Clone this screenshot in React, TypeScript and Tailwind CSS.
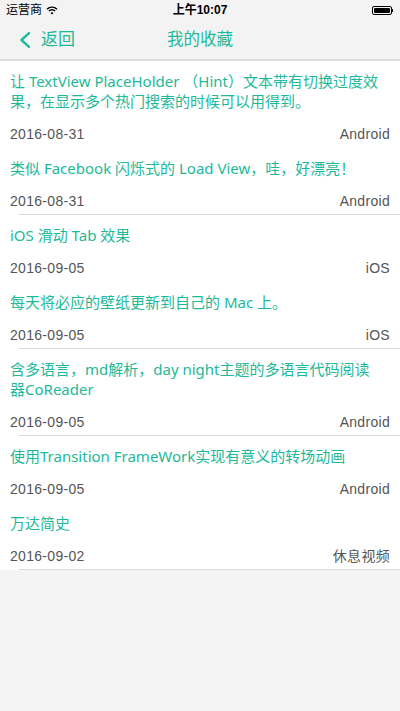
const items = [
    { title: "让 TextView PlaceHolder （Hint）文本带有切换过度效果，在显示多个热门搜索的时候可以用得到。", date: "2016-08-31", tag: "Android", line: false },
    { title: "类似 Facebook 闪烁式的 Load View，哇，好漂亮！", date: "2016-08-31", tag: "Android", line: true },
    { title: "iOS 滑动 Tab 效果", date: "2016-09-05", tag: "iOS", line: false },
    { title: "每天将必应的壁纸更新到自己的 Mac 上。", date: "2016-09-05", tag: "iOS", line: true },
    // the original wraps before 器
    { title: "含多语言，md解析，day night主题的多语言代码阅读\n器CoReader", date: "2016-09-05", tag: "Android", line: true },
    { title: "使用Transition FrameWork实现有意义的转场动画", date: "2016-09-05", tag: "Android", line: false },
    { title: "万达简史", date: "2016-09-02", tag: "休息视频", line: true },
];

const font = { fontFamily: '"Liberation Sans", "Noto Sans CJK SC", sans-serif' };
const titleFont = { fontFamily: '"Noto Sans", "Noto Sans CJK SC", sans-serif' };

const StatusBar = () => (
    <div className="h-5 flex items-center justify-between px-[6px] relative text-black">
        <div className="flex items-center gap-[4px] text-[12px]">
            <span>运营商</span>
            <svg width="12" height="9" viewBox="0 0 12 9">
                <path d="M1 3.2a7 7 0 0 1 10 0" stroke="#000" strokeWidth="1.4" fill="none" />
                <path d="M2.9 5.1a4.3 4.3 0 0 1 6.2 0" stroke="#000" strokeWidth="1.4" fill="none" />
                <path d="M6 8.5 4.5 6.9a2.2 2.2 0 0 1 3 0z" fill="#000" />
            </svg>
        </div>
        <span className="absolute left-1/2 -translate-x-1/2 text-[12px] font-semibold">上午10:07</span>
        <div className="flex items-center mr-[1px]">
            <div className="w-[20px] h-[9px] border border-black rounded-[2px] p-[1px]">
                <div className="w-full h-full bg-black rounded-[1px]" />
            </div>
            <div className="w-[1.5px] h-[3px] bg-black" />
        </div>
    </div>
);

const NavBar = () => (
    <div className="h-[41px] flex items-center relative border-b-2 border-[#dcdcdc]">
        <div className="flex items-center pl-[19px] text-[#1db998]">
            {/* back chevron */}
            <svg width="12" height="16" viewBox="0 0 12 16">
                <path d="M10 1.2 2.5 8l7.5 6.8" stroke="currentColor" strokeWidth="2.4" fill="none" strokeLinecap="round" strokeLinejoin="round" />
            </svg>
            <span className="ml-[10px] text-[17px]">返回</span>
        </div>
        <span className="absolute left-1/2 -translate-x-1/2 text-[16.5px] text-[#1db998]">我的收藏</span>
    </div>
);

export default function App() {
    return (
        <div className="w-[400px] h-[711px] bg-[#f4f4f4]" style={font}>
            <div className="bg-[#f3f3f3]">
                <StatusBar />
                <NavBar />
            </div>
            <div className="bg-white">
                {items.map((item, index) => (
                    <div key={index} className="relative pl-[10px] pr-[10px] pt-[10px] pb-[6px]">
                        <p className="text-[15px] leading-[20px] text-[#1db998] whitespace-pre-line" style={titleFont}>{item.title}</p>
                        <div className="flex justify-between mt-[15px] text-[14px] leading-[16px] tracking-[0.3px] text-[#555]">
                            <span>{item.date}</span>
                            <span>{item.tag}</span>
                        </div>
                        {item.line && <div className="absolute left-[19px] right-0 bottom-0 h-px bg-[#dadada]" />}
                    </div>
                ))}
            </div>
        </div>
    );
}
